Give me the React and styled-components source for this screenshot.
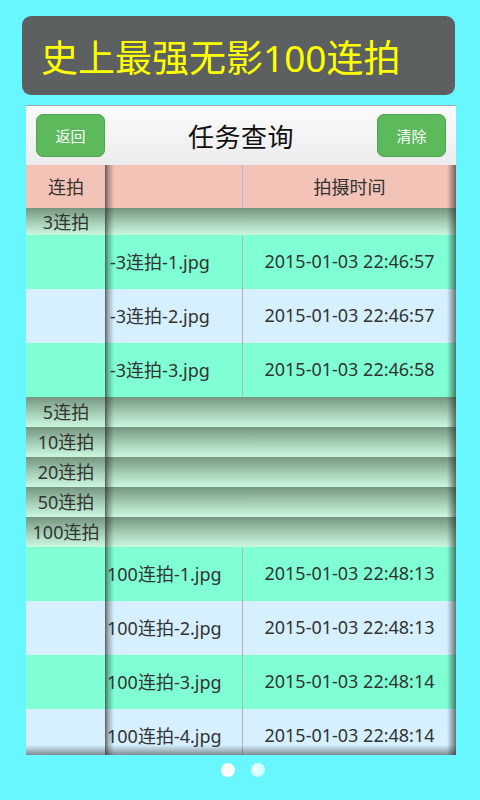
import React from "react";
import styled, { createGlobalStyle } from "styled-components";

const GlobalStyle = createGlobalStyle`
    * {
        box-sizing: border-box;
    }
    html, body {
        margin: 0;
        padding: 0;
        background: #69f7ff;
    }
`;

const Page = styled.div`
    width: 480px;
    height: 800px;
    background: #69f7ff;
    display: flex;
    flex-direction: column;
    font-family: "Noto Sans", "Noto Sans CJK SC", sans-serif;
    overflow: hidden;
`;

const Banner = styled.div`
    margin: 16px 25px 0 22px;
    height: 79px;
    border-radius: 9px;
    background: #5d6061;
    display: flex;
    align-items: center;
    padding-left: 19px;
    color: #ffff00;
    font-size: 37px;
`;

const Phone = styled.div`
    position: relative;
    margin: 10px 0 0 26px;
    width: 430px;
    height: 650px;
    overflow: hidden;
    background: #d6f0ff;
`;

const TopBar = styled.div`
    height: 60px;
    border-top: 1px solid #a6a6a6;
    background: linear-gradient(#fbfbfb, #ececec);
    display: flex;
    align-items: center;
    justify-content: space-between;
    padding: 0 10px;
`;

const GreenButton = styled.div`
    width: 69px;
    height: 43px;
    border-radius: 7px;
    border: 1px solid #4ea54e;
    background: #5cb95c;
    color: #fff;
    font-size: 15px;
    display: flex;
    align-items: center;
    justify-content: center;
`;

const Title = styled.div`
    font-size: 26px;
    color: #111;
    letter-spacing: 0.5px;
`;

const Row = styled.div`
    display: grid;
    grid-template-columns: 80px 136px 1fr;
    height: ${p => p.h}px;
    background: ${p => p.bg};
    color: #333;
    font-size: 18px;
`;

const Cell = styled.div`
    display: flex;
    align-items: center;
    justify-content: ${p => (p.indent !== undefined ? "flex-start" : "center")};
    padding-left: ${p => p.indent || 0}px;
    padding-bottom: 2px;
    white-space: nowrap;
    border-left: ${p => (p.line ? `1px solid ${p.line}` : "none")};
`;

const GroupRow = styled.div`
    height: ${p => p.h}px;
    display: flex;
    align-items: center;
    padding-bottom: 1px;
    background: linear-gradient(#76957f, #a9d3b9 60%, #c8f5dc);
    border-bottom: 1px solid #c9f5dd;
    color: #333;
    font-size: 18px;
`;

const GroupLabel = styled.div`
    width: 80px;
    text-align: center;
    white-space: nowrap;
`;

const ColumnShadow = styled.div`
    position: absolute;
    top: 60px;
    bottom: 0;
    left: 79px;
    width: 9px;
    background: linear-gradient(90deg, rgba(60, 60, 60, 0.8), rgba(0, 0, 0, 0.28) 35%, rgba(0, 0, 0, 0));
`;

const RightShadow = styled.div`
    position: absolute;
    top: 60px;
    bottom: 0;
    right: 0;
    width: 9px;
    background: linear-gradient(90deg, rgba(0, 0, 0, 0), rgba(30, 30, 30, 0.6));
`;

const BottomShadow = styled.div`
    position: absolute;
    left: 0;
    right: 0;
    bottom: 0;
    height: 10px;
    background: linear-gradient(rgba(0, 0, 0, 0), rgba(40, 40, 40, 0.5));
`;

const Dots = styled.div`
    display: flex;
    justify-content: center;
    gap: 16px;
    margin-top: 8px;
    padding-left: 6px;
`;

const Dot = styled.div`
    width: 14px;
    height: 14px;
    border-radius: 50%;
    background: ${p => (p.on ? "#fff" : "radial-gradient(circle at 30% 40%, #f4ffff, #b4fbff)")};
`;

const MINT = "#80ffd4";
const BLUE = "#d6f0ff";

const groups = [
    {
        name: "3连拍",
        h: 27,
        indent: 4,
        files: [
            ["-3连拍-1.jpg", "2015-01-03 22:46:57"],
            ["-3连拍-2.jpg", "2015-01-03 22:46:57"],
            ["-3连拍-3.jpg", "2015-01-03 22:46:58"],
        ],
    },
    { name: "5连拍", h: 30, files: [] },
    { name: "10连拍", h: 30, files: [] },
    { name: "20连拍", h: 30, files: [] },
    { name: "50连拍", h: 30, files: [] },
    {
        name: "100连拍",
        h: 30,
        indent: 1,
        files: [
            ["100连拍-1.jpg", "2015-01-03 22:48:13"],
            ["100连拍-2.jpg", "2015-01-03 22:48:13"],
            ["100连拍-3.jpg", "2015-01-03 22:48:14"],
            ["100连拍-4.jpg", "2015-01-03 22:48:14"],
        ],
    },
];

export default function App() {
    return (
        <Page>
            <GlobalStyle />
            <Banner>史上最强无影100连拍</Banner>
            <Phone>
                <TopBar>
                    <GreenButton>返回</GreenButton>
                    <Title>任务查询</Title>
                    <GreenButton>清除</GreenButton>
                </TopBar>
                <Row h={43} bg="#f2c3b6">
                    <Cell>连拍</Cell>
                    <Cell />
                    <Cell line="#9cc3e5">拍摄时间</Cell>
                </Row>
                {groups.map(g => (
                    <React.Fragment key={g.name}>
                        <GroupRow h={g.h}>
                            <GroupLabel>{g.name}</GroupLabel>
                        </GroupRow>
                        {g.files.map(([file, time], i) => (
                            <Row key={file} h={54} bg={i % 2 === 0 ? MINT : BLUE}>
                                <Cell />
                                <Cell indent={g.indent}>{file}</Cell>
                                <Cell line="#b4b4b4">{time}</Cell>
                            </Row>
                        ))}
                    </React.Fragment>
                ))}
                <ColumnShadow />
                <RightShadow />
                <BottomShadow />
            </Phone>
            <Dots>
                <Dot on />
                <Dot />
            </Dots>
        </Page>
    );
}
